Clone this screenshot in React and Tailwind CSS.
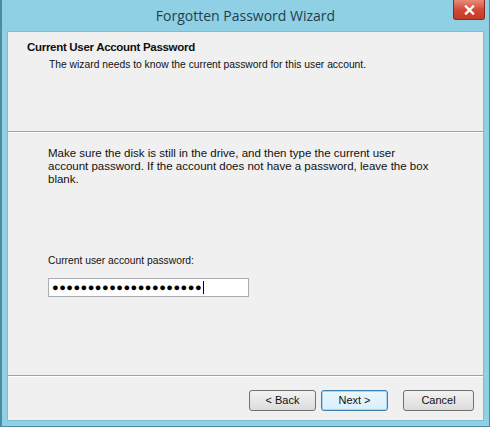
export default function App() {
  return (
    <div className="w-[490px] h-[427px] bg-[#8fd0e4] border-l-2 border-r border-b border-[#4d8ca0] flex flex-col overflow-hidden" style={{ fontFamily: '"Liberation Sans", Arial, sans-serif' }}>
      {/* Title bar */}
      <div className="h-[31px] shrink-0 flex items-start relative">
        <div className="flex-1 text-center pt-[5px] text-[14px] text-[#1f3f4f]" style={{ fontFamily: '"Open Sans", "Liberation Sans", sans-serif' }}>
          Forgotten Password Wizard
        </div>
        <div className="absolute right-[4px] top-0 w-[32px] h-[20px] rounded-b-[3px] border border-t-0 border-[#8a2a20] bg-gradient-to-b from-[#e88a7a] via-[#d24b36] to-[#c33a26] flex items-center justify-center">
          <svg width="11" height="10" viewBox="0 0 11 10">
            <path d="M2 1.5 L9 8.5 M9 1.5 L2 8.5" stroke="#fff" strokeWidth="2.4" strokeLinecap="square" />
          </svg>
        </div>
      </div>
      {/* Client */}
      <div className="flex-1 mx-[5px] mb-[5px] bg-[#f0f0f0] border border-[#7fbcd0] flex flex-col text-[10.3px] text-[#111]">
        <div className="h-[99px] shrink-0 pl-[19px] pt-[7px]">
          <div className="font-bold text-[11.5px] tracking-[-0.3px]">Current User Account Password</div>
          <div className="pl-[22px] mt-[1px]">The wizard needs to know the current password for this user account.</div>
        </div>
        <div className="h-[2px] shrink-0 border-t border-[#a0a0a0] border-b border-b-white" />
        <div className="flex-1 pl-[40px] pt-[14px]">
          <p className="w-[386px] text-[11.5px] leading-[13px]">
            Make sure the disk is still in the drive, and then type the current user account password. If the account does not have a password, leave the box blank.
          </p>
          <div className="mt-[67px]">Current user account password:</div>
          <div className="mt-[10px] w-[201px] h-[19px] bg-white border border-[#abadb3] flex items-center pl-[3px]">
            <span className="text-[11px] tracking-[0.5px] leading-none text-black">●●●●●●●●●●●●●●●●●●●●●</span>
            <span className="w-px h-[13px] bg-black ml-[1px]" />
          </div>
        </div>
        <div className="h-[2px] shrink-0 border-t border-[#a0a0a0] border-b border-b-white" />
        <div className="h-[43px] shrink-0 flex items-start justify-end pt-[13px] pr-[9px]">
          <button className="w-[67px] h-[21px] border border-[#707070] rounded-[3px] bg-gradient-to-b from-[#f2f2f2] to-[#dcdcdc] text-[11px]">&lt; Back</button>
          <button className="ml-[5px] w-[67px] h-[21px] border border-[#3c7fb1] rounded-[3px] bg-gradient-to-b from-[#eaf6fd] to-[#d9f0fc] text-[11px] shadow-[inset_0_0_0_1px_#a8d8f0]">Next &gt;</button>
          <button className="ml-[15px] w-[71px] h-[21px] border border-[#707070] rounded-[3px] bg-gradient-to-b from-[#f2f2f2] to-[#dcdcdc] text-[11px]">Cancel</button>
        </div>
      </div>
    </div>
  );
}
